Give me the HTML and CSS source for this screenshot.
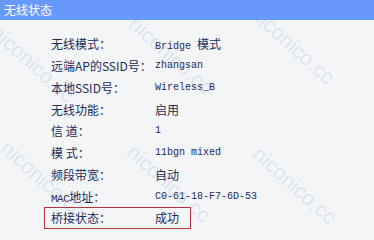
FILE: index.html
```html
<!DOCTYPE html>
<html lang="zh-CN">
<head>
	<meta charset="UTF-8">
	<title>无线状态</title>
	<link rel="stylesheet" href="styles.css">
</head>
<body>
	<div class="panel">
		<div class="panel-title">无线状态</div>
		<div class="status-list">
			<div class="row"><span class="label">无线模式：</span><span class="value mono">Bridge <span class="cjk">模式</span></span></div>
			<div class="row"><span class="label">远端AP的SSID号：</span><span class="value mono">zhangsan</span></div>
			<div class="row"><span class="label">本地SSID号：</span><span class="value mono">Wireless_B</span></div>
			<div class="row"><span class="label">无线功能：</span><span class="value">启用</span></div>
			<div class="row"><span class="label">信 道：</span><span class="value mono">1</span></div>
			<div class="row"><span class="label">模 式：</span><span class="value mono">11bgn mixed</span></div>
			<div class="row"><span class="label">频段带宽：</span><span class="value">自动</span></div>
			<div class="row"><span class="label"><span class="mac">MAC</span>地址：</span><span class="value mono">C0-61-18-F7-6D-53</span></div>
			<div class="row row-marked"><span class="label">桥接状态：</span><span class="value">成功</span></div>
		</div>

		<!-- watermark -->
		<div class="watermark">
			<span class="wm" style="left:2px;top:20px">niconico.cc</span>
			<span class="wm" style="left:140px;top:12px">niconico.cc</span>
			<span class="wm" style="left:262px;top:2px">niconico.cc</span>
			<span class="wm" style="left:12px;top:136px">niconico.cc</span>
			<span class="wm" style="left:138px;top:140px">niconico.cc</span>
			<span class="wm" style="left:264px;top:142px">niconico.cc</span>
		</div>
	</div>
</body>
</html>
```

FILE: styles.css
```css
body {
	margin: 0;
	background-color: #f4f5f7;
	font-family: "Noto Sans CJK SC", sans-serif;
	color: #1f2b55;
}

.panel {
	position: relative;
	width: 374px;
	height: 240px;
	overflow: hidden;
}

.panel-title {
	height: 20px;
	line-height: 20px;
	padding-left: 4px;
	background-color: #6799fd;
	color: #ffffff;
	font-size: 12px;
}

.status-list {
	padding-top: 13px;
}

.row {
	display: flex;
	align-items: center;
	box-sizing: border-box;
	height: 21.75px;
	width: 147px;
	margin-left: 44px;
	padding-left: 6px;
	border: 1px solid transparent;
	font-size: 12px;
	white-space: nowrap;
}

.row-marked {
	border-color: #b8323a;
}

.label {
	width: 104px;
	flex-shrink: 0;
}

.mac {
	font-family: "Liberation Mono", monospace;
	font-size: 11px;
	letter-spacing: -0.5px;
}

.value.mono {
	font-family: "Liberation Mono", monospace;
	font-size: 10px;
}

.value .cjk {
	font-family: "Noto Sans CJK SC", sans-serif;
	font-size: 12px;
}

.watermark {
	position: absolute;
	inset: 0;
	pointer-events: none;
}

.wm {
	position: absolute;
	transform: rotate(42deg);
	transform-origin: 0 0;
	font-family: "Liberation Sans", sans-serif;
	font-size: 21px;
	color: rgba(120, 160, 225, 0.22);
	white-space: nowrap;
}
```
